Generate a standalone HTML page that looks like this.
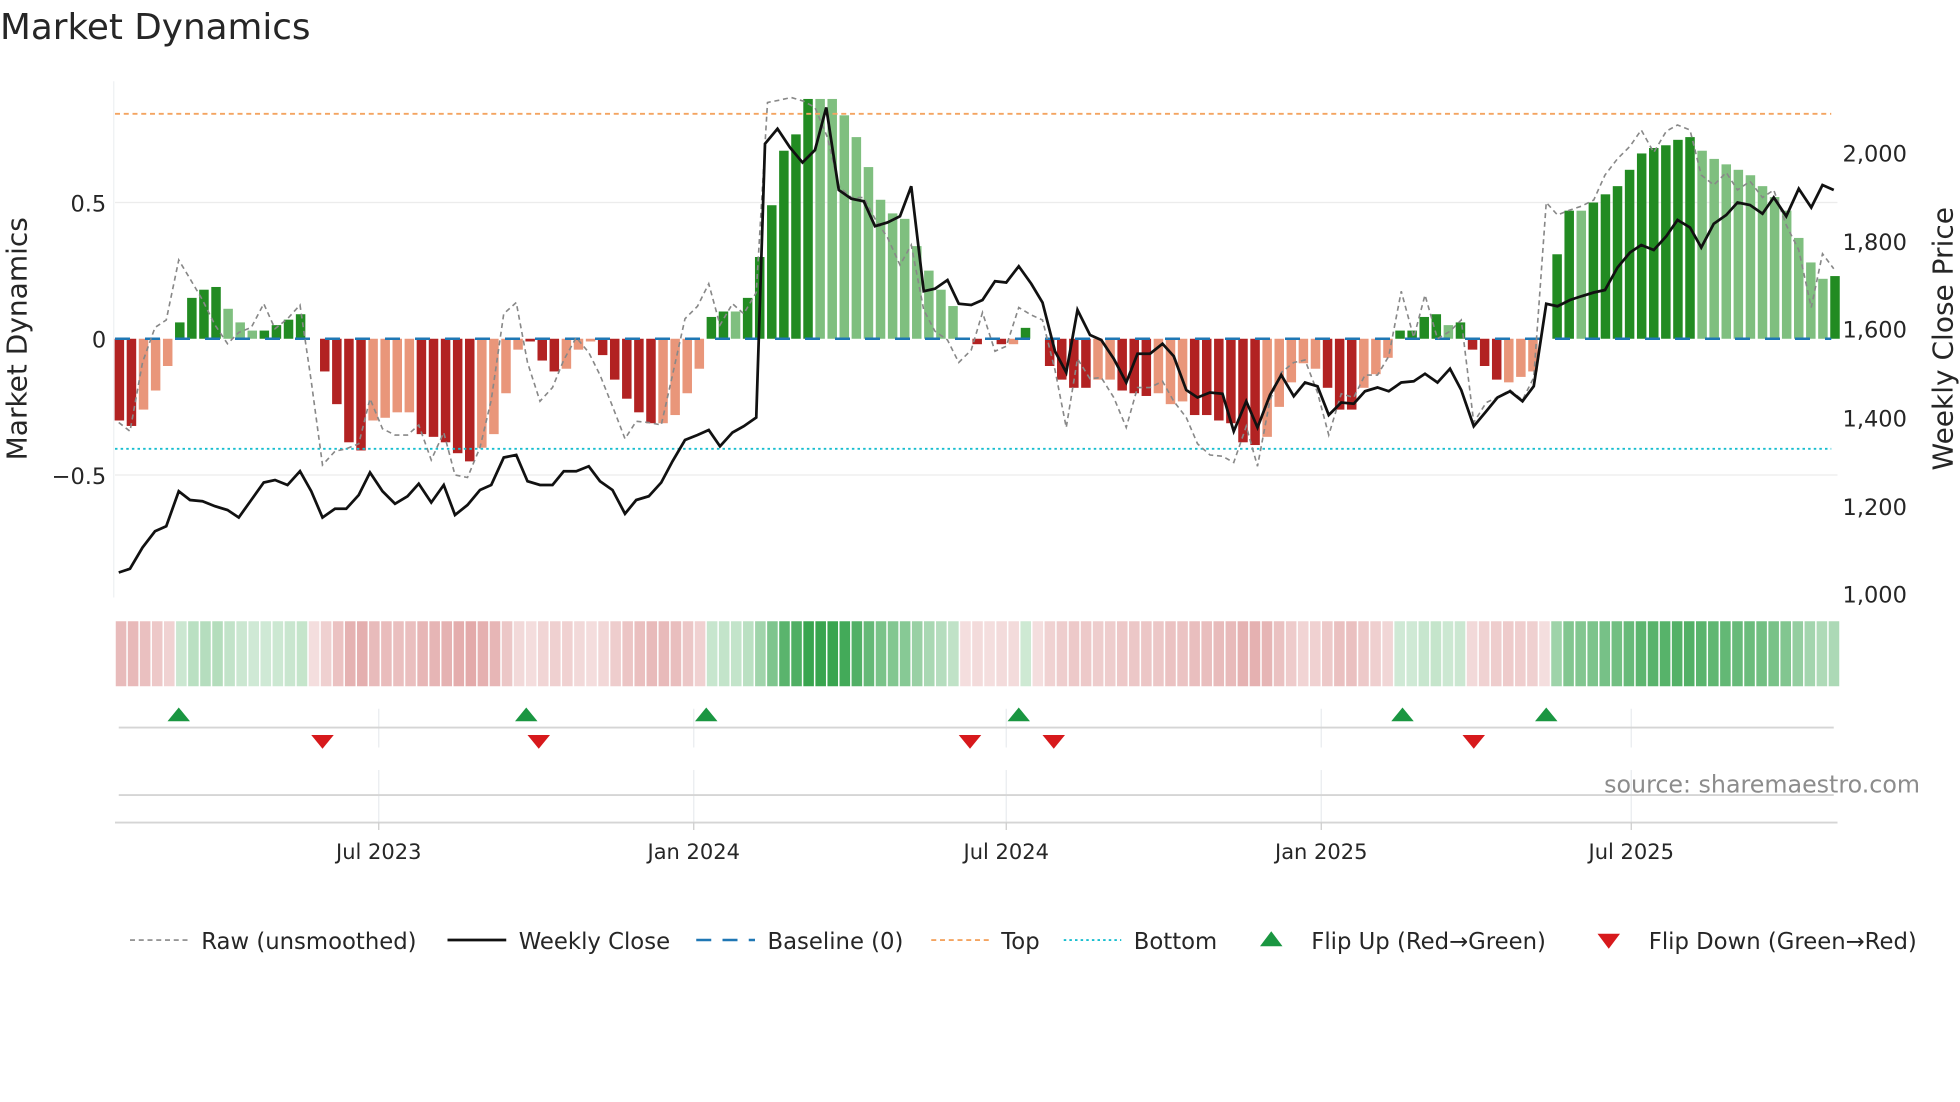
<!DOCTYPE html>
<html><head><meta charset="utf-8"><style>
html,body{margin:0;padding:0;background:#fff;width:1960px;height:1102px;overflow:hidden}
svg{display:block}
text{font-family:"DejaVu Sans","Liberation Sans",sans-serif;fill:#262626}
</style></head><body>
<svg id="s" width="1960" height="1102" viewBox="0 0 1568 881.6" xmlns="http://www.w3.org/2000/svg">
<text x="0" y="31" font-size="28.6" fill="#333">Market Dynamics</text>
<line x1="91" y1="65" x2="91" y2="478" stroke="#eef0f3"/>
<line x1="92" y1="162" x2="1470" y2="162" stroke="#ececec"/>
<line x1="92" y1="380" x2="1470" y2="380" stroke="#ececec"/>
<text x="85" y="169" font-size="18" text-anchor="end">0.5</text>
<text x="85" y="278" font-size="18" text-anchor="end">0</text>
<text x="85" y="387" font-size="18" text-anchor="end">−0.5</text>
<text x="1474" y="129" font-size="18">2,000</text>
<text x="1474" y="200" font-size="18">1,800</text>
<text x="1474" y="270" font-size="18">1,600</text>
<text x="1474" y="341" font-size="18">1,400</text>
<text x="1474" y="412" font-size="18">1,200</text>
<text x="1474" y="482" font-size="18">1,000</text>
<text transform="translate(21,271) rotate(-90)" font-size="22.4" text-anchor="middle">Market Dynamics</text>
<text transform="translate(1562,271) rotate(-90)" font-size="22.4" text-anchor="middle">Weekly Close Price</text>
<g id="bars"></g>
<line x1="92" y1="91" x2="1465" y2="91" stroke="#f4a460" stroke-width="1.5" stroke-dasharray="4,3"/>
<line x1="92" y1="359" x2="1465" y2="359" stroke="#17becf" stroke-width="1.5" stroke-dasharray="2,2.5"/>
<line x1="92" y1="271" x2="1465" y2="271" stroke="#1f77b4" stroke-width="2" stroke-dasharray="12,12"/>
<polyline id="raw" fill="none" stroke="#888" stroke-width="1.3" stroke-dasharray="4,3"/>
<polyline id="close" fill="none" stroke="#111" stroke-width="2.2"/>
<g id="heat"></g>
<g stroke="#e9ecef"><line x1="303" y1="567" x2="303" y2="598"/><line x1="555" y1="567" x2="555" y2="598"/><line x1="805" y1="567" x2="805" y2="598"/><line x1="1057" y1="567" x2="1057" y2="598"/><line x1="1305" y1="567" x2="1305" y2="598"/>
<line x1="303" y1="616" x2="303" y2="658"/><line x1="555" y1="616" x2="555" y2="658"/><line x1="805" y1="616" x2="805" y2="658"/><line x1="1057" y1="616" x2="1057" y2="658"/><line x1="1305" y1="616" x2="1305" y2="658"/></g>
<line x1="95" y1="582" x2="1467" y2="582" stroke="#d5d5d5" stroke-width="1.5"/>
<line x1="95" y1="636" x2="1467" y2="636" stroke="#d5d5d5" stroke-width="1.5"/>
<line x1="92" y1="658" x2="1470" y2="658" stroke="#d5d5d5" stroke-width="1.5"/>
<g stroke="#ccc"><line x1="303" y1="658" x2="303" y2="664"/><line x1="555" y1="658" x2="555" y2="664"/><line x1="805" y1="658" x2="805" y2="664"/><line x1="1057" y1="658" x2="1057" y2="664"/><line x1="1305" y1="658" x2="1305" y2="664"/></g>
<g id="flips"></g>
<g font-size="16.8" text-anchor="middle"><text x="303" y="687">Jul 2023</text><text x="555" y="687">Jan 2024</text><text x="805" y="687">Jul 2024</text><text x="1057" y="687">Jan 2025</text><text x="1305" y="687">Jul 2025</text></g>
<text x="1536" y="634" font-size="19" text-anchor="end" style="fill:#8c8c8c">source: sharemaestro.com</text>
<g font-size="18.2">
<line x1="104" y1="752" x2="150" y2="752" stroke="#888" stroke-width="1.3" stroke-dasharray="4,3"/><text x="161" y="759">Raw (unsmoothed)</text>
<line x1="358" y1="752" x2="405" y2="752" stroke="#111" stroke-width="2.2"/><text x="415" y="759">Weekly Close</text>
<line x1="557" y1="752" x2="604" y2="752" stroke="#1f77b4" stroke-width="2" stroke-dasharray="12,9"/><text x="614" y="759">Baseline (0)</text>
<line x1="745" y1="752" x2="791" y2="752" stroke="#f4a460" stroke-width="1.5" stroke-dasharray="4,3"/><text x="801" y="759">Top</text>
<line x1="851" y1="752" x2="897" y2="752" stroke="#17becf" stroke-width="1.5" stroke-dasharray="2,2.5"/><text x="907" y="759">Bottom</text>
<polygon points="1008,757 1026,757 1017,745" fill="#1a9641"/><text x="1049" y="759">Flip Up (Red→Green)</text>
<polygon points="1278,747 1296,747 1287,759" fill="#d7191c"/><text x="1319" y="759">Flip Down (Green→Red)</text>
</g>
</svg>
<script>
var V=[[-.3,1],[-.32,1],[-.26,0],[-.19,0],[-.1,0],[.06,1],[.15,1],[.18,1],[.19,1],[.11,0],[.06,0],[.03,0],[.03,1],[.05,1],[.07,1],[.09,1],[0,1],
[-.12,1],[-.24,1],[-.38,1],[-.41,1],[-.3,0],[-.29,0],[-.27,0],[-.27,0],[-.35,1],[-.36,1],[-.38,1],[-.42,1],[-.45,1],[-.4,0],[-.35,0],[-.2,0],[-.04,0],[-.01,1],[-.08,1],[-.12,1],[-.11,0],[-.04,0],[-.01,0],[-.06,1],[-.15,1],[-.22,1],[-.27,1],[-.31,1],[-.31,0],[-.28,0],[-.2,0],[-.11,0],
[.08,1],[.1,1],[.1,0],[.15,1],[.3,1],[.49,1],[.69,1],[.75,1],[.88,1],[.88,0],[.88,0],[.82,0],[.74,0],[.63,0],[.51,0],[.46,0],[.44,0],[.34,0],[.25,0],[.18,0],[.12,0],[0,0],[-.02,1],[0,0],[-.02,1],[-.02,0],[.04,1],[0,0],
[-.1,1],[-.15,1],[-.18,1],[-.18,1],[-.15,0],[-.15,0],[-.19,1],[-.2,1],[-.21,1],[-.2,0],[-.24,0],[-.23,0],[-.28,1],[-.28,1],[-.3,1],[-.31,1],[-.38,1],[-.39,1],[-.36,0],[-.25,0],[-.16,0],[-.09,0],[-.11,0],[-.18,1],[-.26,1],[-.26,1],[-.18,0],[-.13,0],[-.07,0],
[.03,1],[.03,1],[.08,1],[.09,1],[.05,0],[.06,1],[-.04,1],[-.1,1],[-.15,1],[-.16,0],[-.14,0],[-.12,0],[0,0],
[.31,1],[.47,1],[.47,0],[.5,1],[.53,1],[.56,1],[.62,1],[.68,1],[.7,1],[.71,1],[.73,1],[.74,1],[.69,0],[.66,0],[.64,0],[.62,0],[.6,0],[.56,0],[.52,0],[.47,0],[.37,0],[.28,0],[.22,0],[.23,1]];
var N=V.length,x0=95.5,x1=1468,dx=(x1-x0)/(N-1),b="",h="";
var hx0=92,hw=(1472-92)/N;
for(var i=0;i<N;i++){var v=V[i][0],d=V[i][1],x=x0+i*dx,hgt=Math.abs(v)*218;
 var c=v>=0?(d?"#228b22":"#7fbf7f"):(d?"#b22222":"#e9967a");
 if(hgt>0.5)b+='<rect x="'+(x-3.8)+'" y="'+(v>=0?271-hgt:271)+'" width="7.6" height="'+hgt+'" fill="'+c+'"/>';
 var hc=v>0.001?"rgba(46,160,70,"+(0.2+Math.abs(v)*0.85)+")":"rgba(200,90,90,"+(0.2+Math.abs(v)*0.7)+")";
 h+='<rect x="'+(hx0+i*hw+0.6)+'" y="497" width="'+(hw-1.2)+'" height="52" fill="'+hc+'"/>';}
document.getElementById("bars").innerHTML=b;document.getElementById("heat").innerHTML=h;
var C="95,458 104,455 114,438 124,425 133,421 143,393 152,400 162,401 172,405 182,408 191,414 201,400 211,386 220,384 230,388 240,377 249,393 258,414 268,407 277,407 287,396 296,378 306,393 316,403 326,397 335,387 345,402 355,388 364,412 374,404 384,392 393,388 403,366 413,364 422,385 432,388 442,388 451,377 461,377 471,373 480,385 490,392 500,411 509,400 519,397 529,386 538,369 548,352 558,348 567,344 576,357 586,346 595,341 605,334 612,115 622,103 632,118 642,130 652,120 661,86 671,152 681,159 691,161 700,181 710,178 720,173 729,149 739,233 748,231 758,224 767,243 777,244 786,240 796,225 805,226 815,213 825,227 834,242 844,281 853,298 862,248 872,268 881,272 891,287 901,306 910,283 920,283 930,275 939,285 949,312 958,318 968,314 978,315 987,345 997,321 1006,342 1016,316 1025,300 1035,317 1044,306 1054,309 1063,332 1073,322 1083,323 1092,313 1102,310 1111,313 1121,306 1131,305 1140,299 1150,306 1160,295 1169,312 1179,341 1189,329 1198,318 1208,313 1218,321 1227,309 1237,243 1246,245 1256,240 1265,237 1275,234 1284,232 1294,214 1304,202 1313,196 1323,200 1333,189 1342,176 1352,182 1361,198 1371,179 1381,172 1390,162 1400,164 1410,171 1419,158 1429,173 1439,151 1449,166 1458,148 1467,152";
var R="95,338 104,345 114,290 124,262 133,256 143,208 152,223 162,240 172,260 182,275 191,266 201,262 211,243 220,263 230,255 240,244 249,305 258,372 268,361 277,359 287,355 296,319 306,343 316,348 326,348 335,340 345,368 355,346 364,380 374,382 384,358 393,320 403,251 413,242 422,290 432,321 442,310 451,288 461,270 471,282 480,300 490,325 500,351 509,337 519,338 529,340 538,300 548,255 558,245 567,227 576,260 586,243 595,251 605,234 614,82 624,80 633,78 643,81 652,86 662,110 671,149 681,158 691,158 700,175 710,190 720,212 729,196 739,248 748,265 758,272 767,290 777,280 786,250 796,281 805,277 815,246 825,252 834,256 844,296 853,342 862,287 872,303 881,302 891,318 901,342 910,310 920,310 930,305 939,321 949,334 958,355 968,364 978,365 987,370 997,341 1006,373 1016,320 1025,298 1035,290 1044,288 1054,314 1063,348 1073,315 1083,318 1092,300 1102,300 1111,285 1121,233 1131,270 1140,236 1150,271 1160,265 1169,256 1179,338 1189,322 1198,318 1208,312 1218,320 1227,302 1237,162 1246,172 1256,168 1265,165 1275,160 1284,140 1294,127 1304,117 1313,104 1323,122 1333,105 1342,100 1352,104 1361,140 1371,148 1381,138 1390,152 1400,145 1410,158 1419,152 1429,180 1439,200 1449,246 1458,203 1467,215";
document.getElementById("close").setAttribute("points",C);document.getElementById("raw").setAttribute("points",R);
var f="";[143,421,565,815,1122,1237].forEach(function(x){f+='<polygon points="'+(x-9)+',577 '+(x+9)+',577 '+x+',566" fill="#1a9641"/>';});
[258,431,776,843,1179].forEach(function(x){f+='<polygon points="'+(x-9)+',588 '+(x+9)+',588 '+x+',599" fill="#d7191c"/>';});
document.getElementById("flips").innerHTML=f;
</script>
</body></html>
